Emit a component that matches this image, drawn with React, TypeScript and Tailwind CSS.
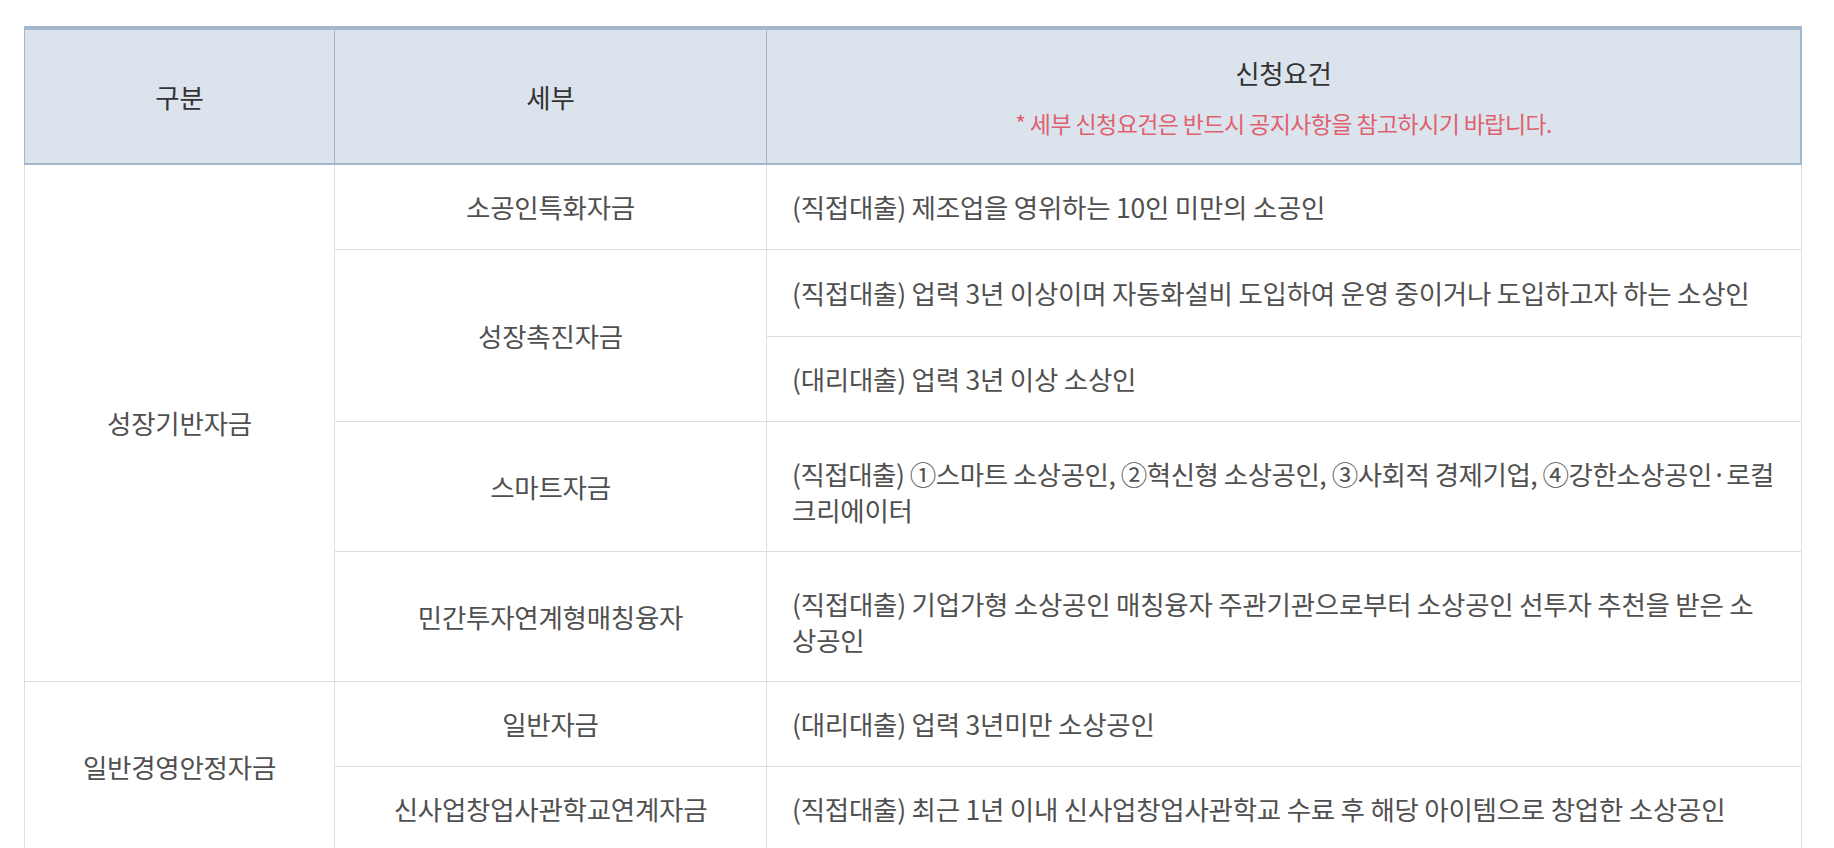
import React from "react";

const cell = "flex items-center border-r border-b border-[#dddddd]";

export default function App() {
  return (
    <div className="h-[848px] w-[1834px] overflow-hidden bg-white font-['Noto_Sans_CJK_KR',sans-serif] text-[26.5px] tracking-[-0.25px]">
      <div className="ml-[24px] mt-[26px] w-[1778px]">
        {/* header */}
        <div className="grid grid-cols-[310px_432px_1035px] border-t-[4px] border-l border-[#a3b7cb] bg-[#dbe4ed] text-[#333333]">
          <div className="flex h-[135px] items-center justify-center border-r border-b-2 border-[#a3b7cb]">구분</div>
          <div className="flex h-[135px] items-center justify-center border-r border-b-2 border-[#a3b7cb]">세부</div>
          <div className="flex h-[135px] flex-col items-center justify-center border-r-2 border-b-2 border-[#a3b7cb]">
            <div className="leading-[30px]">신청요건</div>
            <div className="mt-[22px] text-[23px] leading-[26px] tracking-[-0.6px] text-[#e0606f]">* 세부 신청요건은 반드시 공지사항을 참고하시기 바랍니다.</div>
          </div>
        </div>
        {/* body */}
        <div className="grid grid-cols-[310px_432px_1035px] grid-rows-[85px_87px_85px_130px_130px_85px_85px] border-l border-[#dddddd] text-[#505050]">
          <div className={`${cell} col-start-1 row-span-5 justify-center`}>성장기반자금</div>
          <div className={`${cell} col-start-2 justify-center`}>소공인특화자금</div>
          <div className={`${cell} col-start-3 px-[25px]`}>(직접대출) 제조업을 영위하는 10인 미만의 소공인</div>

          <div className={`${cell} col-start-2 row-span-2 justify-center`}>성장촉진자금</div>
          <div className={`${cell} col-start-3 px-[25px]`}>(직접대출) 업력 3년 이상이며 자동화설비 도입하여 운영 중이거나 도입하고자 하는 소상인</div>
          <div className={`${cell} col-start-3 px-[25px]`}>(대리대출) 업력 3년 이상 소상인</div>

          <div className={`${cell} col-start-2 justify-center`}>스마트자금</div>
          <div className={`${cell} col-start-3 px-[25px] pt-[10px] leading-[36px]`}>
            <div>
              <div className="whitespace-nowrap tracking-[-0.5px]">(직접대출) ①스마트 소상공인, ②혁신형 소상공인, ③사회적 경제기업, ④강한소상공인·로컬</div>
              <div className="whitespace-nowrap">크리에이터</div>
            </div>
          </div>

          <div className={`${cell} col-start-2 justify-center`}>민간투자연계형매칭융자</div>
          <div className={`${cell} col-start-3 px-[25px] pt-[10px] leading-[36px]`}>
            <div>
              <div className="whitespace-nowrap">(직접대출) 기업가형 소상공인 매칭융자 주관기관으로부터 소상공인 선투자 추천을 받은 소</div>
              <div className="whitespace-nowrap">상공인</div>
            </div>
          </div>

          <div className={`${cell} col-start-1 row-span-2 justify-center`}>일반경영안정자금</div>
          <div className={`${cell} col-start-2 justify-center`}>일반자금</div>
          <div className={`${cell} col-start-3 px-[25px]`}>(대리대출) 업력 3년미만 소상공인</div>

          <div className={`${cell} col-start-2 justify-center`}>신사업창업사관학교연계자금</div>
          <div className={`${cell} col-start-3 px-[25px]`}>(직접대출) 최근 1년 이내 신사업창업사관학교 수료 후 해당 아이템으로 창업한 소상공인</div>
        </div>
      </div>
    </div>
  );
}
